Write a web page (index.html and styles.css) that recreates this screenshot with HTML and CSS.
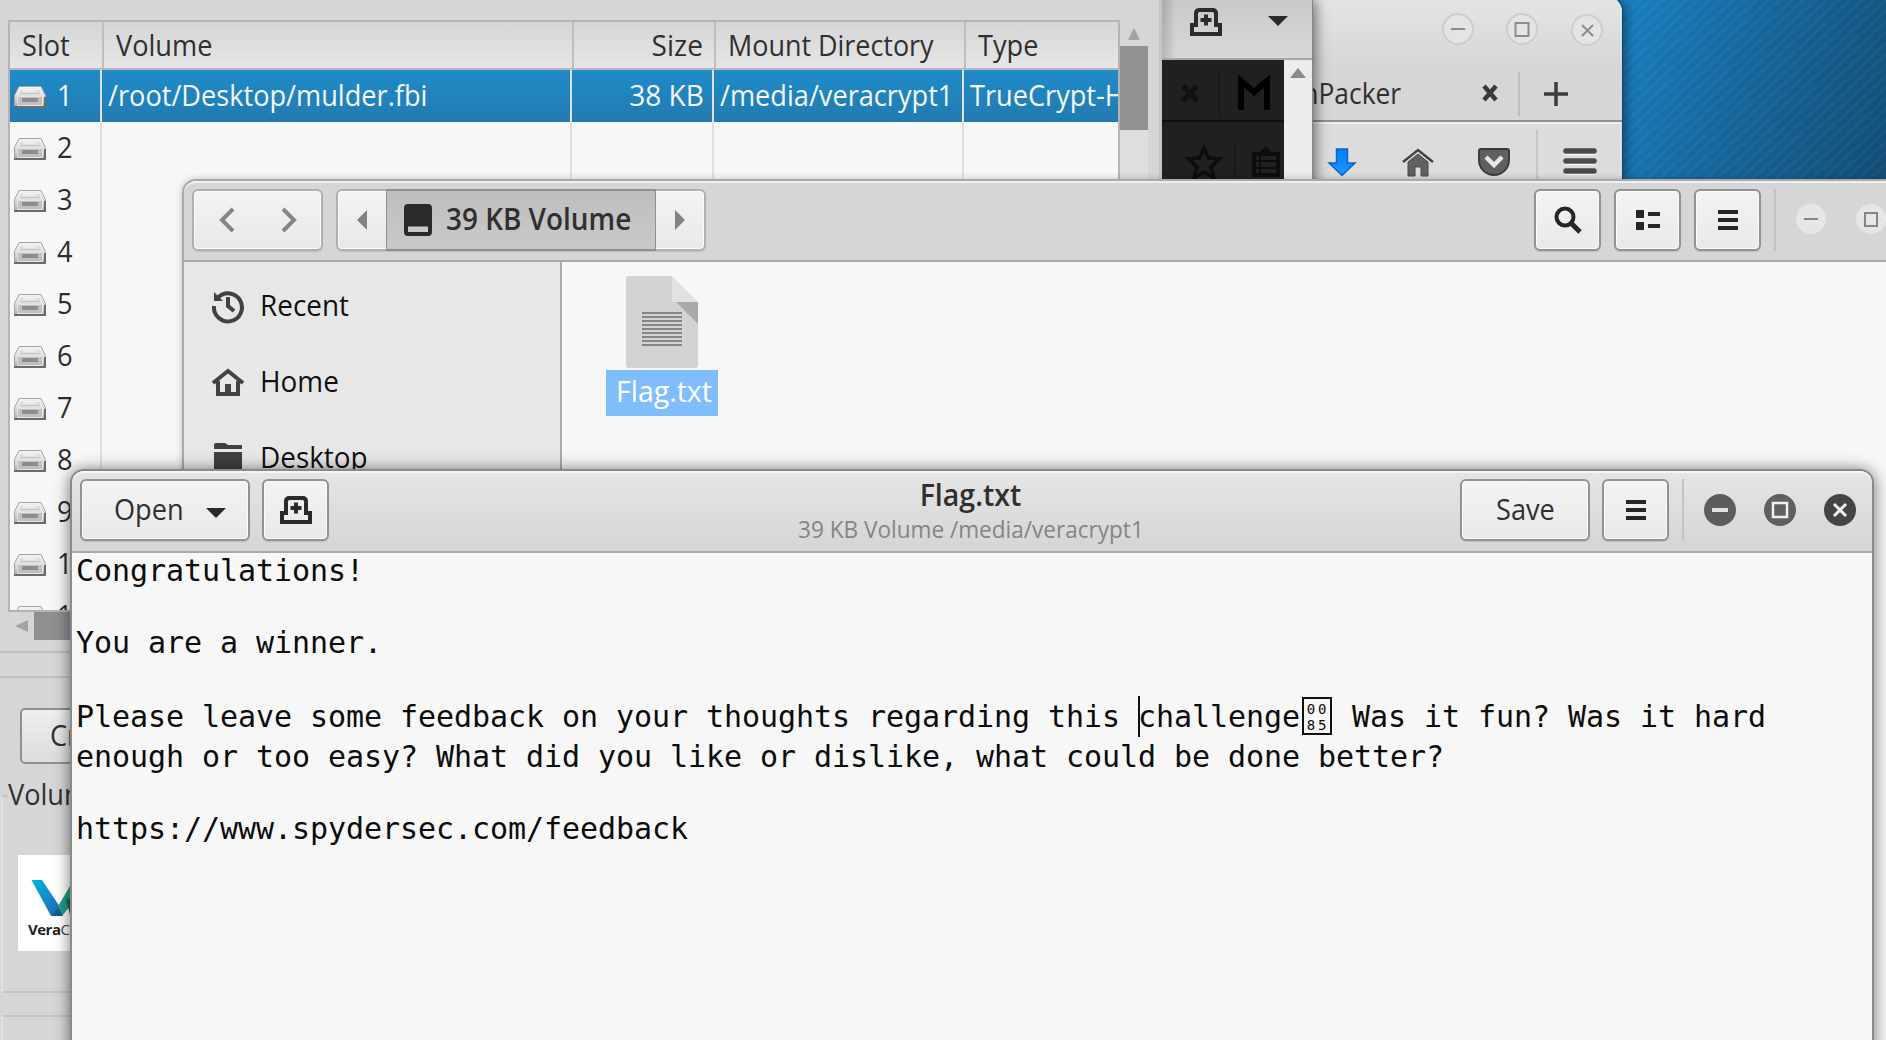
FILE: index.html
```
<!DOCTYPE html>
<html lang="en">
<head>
<meta charset="utf-8">
<title>Desktop</title>
<link rel="stylesheet" href="styles.css">
</head>
<body>
<svg class="defs" aria-hidden="true">
  <defs>
    <linearGradient id="metal" x1="0" y1="0" x2="0" y2="1"><stop offset="0" stop-color="#f4f4f4"/><stop offset=".5" stop-color="#dedede"/><stop offset="1" stop-color="#a0a0a0"/></linearGradient>
    <linearGradient id="arrow" x1="0" y1="0" x2="0" y2="1"><stop offset="0" stop-color="#007df8"/><stop offset="1" stop-color="#1d98ff"/></linearGradient>
    <linearGradient id="vee" x1="0" y1="0" x2="1" y2="1"><stop offset="0" stop-color="#00b4e0"/><stop offset="1" stop-color="#2460b4"/></linearGradient>
    <symbol id="drive" viewBox="0 0 32 22">
      <path d="M5 .5h22l4.500 9v12H.5v-12z" fill="url(#metal)" stroke="#a5a5a5"/>
      <path d="M7 5.500l1-1M25 5.500l-1-1M6 7.500h20" stroke="#c6c6c6" stroke-width="1.500" fill="none"/>
      <path d="M3.500 10.500h25v9h-25z" fill="#c0c0c0" stroke="#e4e4e4"/>
      <path d="M8 12h16v4H8z" fill="#8c8c8c"/>
      <path d="M0 21h32M31 11v10" stroke="#6c6c6c" stroke-width="2"/>
    </symbol>
    <symbol id="newdoc" viewBox="0 0 32 28">
      <path d="M6 17V5.500Q6 2 9.500 2h13Q26 2 26 5.500V17h4v9H2v-9z" fill="none" stroke="#2b2b2b" stroke-width="4"/>
      <path d="M16 6.500v11M10.500 12h11" stroke="#2b2b2b" stroke-width="4"/>
    </symbol>
    <symbol id="lines" viewBox="0 0 20 20"><path d="M0 2h20M0 10h20M0 18h20" stroke="#262626" stroke-width="4"/></symbol>
  </defs>
</svg>

<main class="desktop">

  <section class="win veracrypt">
    <div class="list">
      <div class="cols head"><span><i class="t">Slot</i></span><span><i class="t">Volume</i></span><span class="num"><i class="t">Size</i></span><span><i class="t mount">Mount Directory</i></span><span><i class="t">Type</i></span></div>
      <div class="cols row sel"><span><svg class="drive"><use href="#drive"/></svg><i class="t">1</i></span><span><i class="t">/root/Desktop/mulder.fbi</i></span><span class="num"><i class="t">38 KB</i></span><span><i class="t">/media/veracrypt1</i></span><span><i class="t">TrueCrypt-H</i></span></div>
      <div class="cols row"><span><svg class="drive"><use href="#drive"/></svg><i class="t">2</i></span><span></span><span></span><span></span><span></span></div>
      <div class="cols row"><span><svg class="drive"><use href="#drive"/></svg><i class="t">3</i></span><span></span><span></span><span></span><span></span></div>
      <div class="cols row"><span><svg class="drive"><use href="#drive"/></svg><i class="t">4</i></span><span></span><span></span><span></span><span></span></div>
      <div class="cols row"><span><svg class="drive"><use href="#drive"/></svg><i class="t">5</i></span><span></span><span></span><span></span><span></span></div>
      <div class="cols row"><span><svg class="drive"><use href="#drive"/></svg><i class="t">6</i></span><span></span><span></span><span></span><span></span></div>
      <div class="cols row"><span><svg class="drive"><use href="#drive"/></svg><i class="t">7</i></span><span></span><span></span><span></span><span></span></div>
      <div class="cols row"><span><svg class="drive"><use href="#drive"/></svg><i class="t">8</i></span><span></span><span></span><span></span><span></span></div>
      <div class="cols row"><span><svg class="drive"><use href="#drive"/></svg><i class="t">9</i></span><span></span><span></span><span></span><span></span></div>
      <div class="cols row"><span><svg class="drive"><use href="#drive"/></svg><i class="t">10</i></span><span></span><span></span><span></span><span></span></div>
      <div class="cols row"><span><svg class="drive"><use href="#drive"/></svg><i class="t">11</i></span><span></span><span></span><span></span><span></span></div>
    </div>
    <div class="vbar"><svg width="12" height="12"><path d="M6 0l6 12H0z" fill="#a3a3a3"/></svg><div class="vthumb"></div></div>
    <div class="hbar"><svg width="13" height="12"><path d="M0 6L13 0v12z" fill="#a3a3a3"/></svg><div class="hthumb"></div></div>
    <div class="lower">
      <div class="actions"><div class="create"><i class="t">Create Volume</i></div></div>
      <div class="group">
        <i class="t legend">Volume</i>
        <div class="logo">
          <svg width="96" height="64" viewBox="18 854 96 64">
            <path d="M31.500 879H42L62 909V915H51z" fill="url(#vee)"/>
            <path d="M54 912L73 880H90L62 915H52z" fill="#239a8c"/>
            <path d="M66 897L78 903 70 914z" fill="#13693f"/>
            <path d="M52 915l6-9 5 9z" fill="#125f86"/>
          </svg>
          <div class="brand"><b>Vera</b>Crypt</div>
        </div>
      </div>
      <div class="group last"></div>
    </div>
  </section>

  <section class="win browser">
    <div class="btitle">
      <svg width="168" height="36" fill="none" stroke="#8b8b8b" stroke-width="2">
        <g fill="#e4e4e4" stroke="#d0cecc"><circle cx="18" cy="17" r="15"/><circle cx="82" cy="17" r="15"/><circle cx="147" cy="18" r="15"/></g>
        <path d="M11 17h14M75.500 11h13v13h-13zM142 13l11 11M153 13l-11 11"/>
      </svg>
    </div>
    <div class="tabs">
      <i class="t">UnPacker</i>
      <svg class="tabx" width="16" height="16"><path d="M2 1l12 14M14 1L2 15" stroke="#3a3a3a" stroke-width="4.500"/></svg>
      <span class="tabsep"></span>
      <svg class="plus" width="24" height="24"><path d="M12 0v24M0 12h24" stroke="#3c3c3c" stroke-width="3.500"/></svg>
    </div>
    <div class="tools">
      <svg width="28" height="28" viewBox="0 0 28 28"><path d="M8.500 1h11v14H27L14 27.500 1 15h7.500z" fill="url(#arrow)" stroke="#0a66c4" stroke-width="1.500"/></svg>
      <svg width="32" height="28" viewBox="0 0 32 28"><path d="M1 14L16 2l15 12" fill="none" stroke="#434343" stroke-width="2.500"/><path d="M6 14L16 6l10 8v14h-7V19h-6v9H6z" fill="#606060" stroke="#4a4a4a"/></svg>
      <svg width="32" height="28" viewBox="0 0 32 28"><path d="M1 3Q1 1 3 1h26q2 0 2 2v9a15 15 0 0 1-30 0z" fill="#606060" stroke="#3c3c3c" stroke-width="2"/><path d="M8 9l8 8 8-8" fill="none" stroke="#e8e8e8" stroke-width="4.500"/></svg>
      <span class="toolsep"></span>
      <svg class="menu" width="32" height="26"><path d="M1 3h30M1 13h30M1 23h30" stroke="#fafafa" stroke-width="5" transform="translate(0 1.500)"/><path d="M2 3h28M2 13h28M2 23h28" stroke="#4a4a4a" stroke-width="5.500" stroke-linecap="round"/></svg>
    </div>
  </section>

  <section class="win oldedit">
    <div class="ohead">
      <svg width="32" height="28"><use href="#newdoc"/></svg>
      <svg width="20" height="10"><path d="M0 0h20L10 10z" fill="#2a2a2a"/></svg>
    </div>
    <div class="obody">
      <svg class="dark" width="122" height="120" viewBox="0 0 122 120">
        <path d="M0 0h122v120H0z" fill="#202020"/>
        <path d="M21 26l14 15M35 26L21 41" stroke="#111" stroke-width="5"/>
        <path d="M57 12v44M73 84v36" stroke="#1a1a1a" stroke-width="2"/>
        <path d="M79 50V21l13 11 13-11v29" fill="none" stroke="#000" stroke-width="6"/>
        <path d="M0 61h122" stroke="#101010" stroke-width="2"/>
        <path d="M42 88l4.500 10 11 1-8.500 8 3 11-10-6-10 6 3-11-8.500-8 11-1z" fill="none" stroke="#0d0d0d" stroke-width="3.500"/>
        <path d="M92 94h24v21H92z" fill="none" stroke="#0d0d0d" stroke-width="4"/>
        <path d="M97 93l7-7 7 7z" fill="#0d0d0d"/>
        <path d="M92 101h24M92 108h24M98 94v21" fill="none" stroke="#0d0d0d" stroke-width="2"/>
      </svg>
      <div class="obar"><svg width="16" height="10"><path d="M8 0l8 10H0z" fill="#8a8a8a"/></svg></div>
    </div>
  </section>

  <section class="win files">
    <header class="fhead">
      <div class="btn nav">
        <svg width="78" height="26" fill="none" stroke="#858585" stroke-width="4"><path d="M14 2L3 13l11 11M64 2l11 11L64 24"/></svg>
      </div>
      <div class="btn path">
        <span class="end"><svg width="10" height="20"><path d="M10 0v20L0 10z" fill="#828282"/></svg></span>
        <span class="cur"><svg width="28" height="32"><path d="M4 0h20q4 0 4 4v24q0 4-4 4H4q-4 0-4-4V4q0-4 4-4z" fill="#2a2a2a"/><path d="M4 22.500h20v5.500H4z" fill="#c8c8c8"/></svg><i class="t bold">39 KB Volume</i></span>
        <span class="end"><svg width="10" height="20"><path d="M0 0v20l10-10z" fill="#828282"/></svg></span>
      </div>
      <div class="grow"></div>
      <div class="btn sq"><svg width="28" height="28"><circle cx="11" cy="11" r="8.500" fill="none" stroke="#262626" stroke-width="4"/><path d="M17 17l9 9" stroke="#262626" stroke-width="5"/></svg></div>
      <div class="btn sq"><svg width="24" height="20"><path d="M0 0h8v8H0zM12 2h12v4H12zM0 12h8v8H0zM12 14h12v4H12z" fill="#262626"/></svg></div>
      <div class="btn sq"><svg width="20" height="20"><use href="#lines"/></svg></div>
      <div class="fwm">
        <svg width="100" height="32" fill="none" stroke="#858585" stroke-width="2"><g fill="#e6e6e6" stroke="none"><circle cx="16" cy="16" r="15"/><circle cx="76" cy="16" r="15"/></g><path d="M9 16h14M70 10h12v13H70z"/></svg>
      </div>
    </header>
    <div class="fbody">
      <aside class="side">
        <div class="place"><svg width="32" height="32" fill="none" stroke="#424242" stroke-width="4"><path d="M6 7.500A14 14 0 1 1 2 16"/><path d="M16 7v9l6 5"/><path d="M2 2v9h9z" fill="#424242" stroke="none"/></svg><i class="t">Recent</i></div>
        <div class="place"><svg width="32" height="28" fill="none" stroke="#424242" stroke-width="4"><path d="M1 15L16 3l15 12"/><path d="M6 13v13h20V13"/><path d="M16 16v10" stroke-width="6"/></svg><i class="t">Home</i></div>
        <div class="place"><svg width="32" height="30"><path d="M2 2q0-2 2-2h9l3 2h14v4H2zM2 9h28v19H2z" fill="#404040"/></svg><i class="t">Desktop</i></div>
      </aside>
      <div class="canvas">
        <div class="file">
          <svg width="72" height="92">
            <path d="M3 0h43l26 26v63q0 3-3 3H3q-3 0-3-3V3q0-3 3-3z" fill="#d3d3d3"/>
            <path d="M46 0l26 26H46z" fill="#e2e2e2"/><path d="M50 26h22v22z" fill="#a9a9a9"/>
            <path d="M16 37h40M16 41h40M16 45h40M16 49h40M16 53h40M16 57h40M16 61h40M16 65h40M16 69h40" stroke="#858585" stroke-width="2"/>
          </svg>
          <div class="fname"><i class="t">Flag.txt</i></div>
        </div>
      </div>
    </div>
  </section>

  <section class="win editor">
    <header class="ehead">
      <div class="btn open"><i class="t">Open</i><svg width="20" height="10"><path d="M0 0h20L10 10z" fill="#2a2a2a"/></svg></div>
      <div class="btn sq new"><svg width="32" height="28"><use href="#newdoc"/></svg></div>
      <div class="title"><i class="t bold">Flag.txt</i><i class="t sub">39 KB Volume /media/veracrypt1</i></div>
      <div class="btn save"><i class="t">Save</i></div>
      <div class="btn sq"><svg width="20" height="20"><use href="#lines"/></svg></div>
      <div class="wm">
        <svg width="152" height="32" fill="none" stroke="#f0f0f0"><circle cx="16" cy="16" r="16" fill="#5d5d5d" stroke="none"/><circle cx="76" cy="16" r="16" fill="#606060" stroke="none"/><circle cx="136" cy="16" r="16" fill="#454545" stroke="none"/><path d="M8 16h16" stroke-width="4" stroke="#e0e0e0"/><path d="M69 9h14v14H69z" stroke-width="2.500"/><path d="M130 10l12 12M142 10l-12 12" stroke-width="3"/></svg>
      </div>
    </header>
    <div class="text">
      <p>Congratulations!</p>
      <p></p>
      <p>You are a winner.</p>
      <p></p>
      <p class="tall"><span>Please leave some feedback on your thoughts regarding this </span><span class="caret"></span><span>challenge</span><span class="hex"><b>00</b><b>85</b></span><span> Was it fun? Was it hard</span></p>
      <p>enough or too easy? What did you like or dislike, what could be done better?</p>
      <p></p>
      <p>https://www.spydersec.com/feedback</p>
    </div>
  </section>
</main>
</body>
</html>
```
FILE: styles.css
```
* { box-sizing: border-box; }
body { margin: 0; font: 30px/36px "Open Sans", "Noto Sans", sans-serif; color: #303030; overflow: hidden; }
svg { display: block; flex: none; overflow: visible; }
.defs { position: absolute; width: 0; height: 0; }

.desktop {
  position: relative; width: 1886px; height: 1040px; overflow: hidden;
  background:
    repeating-linear-gradient(137deg, rgba(255,255,255,0) 0 4px, rgba(255,255,255,.035) 5px 7px, rgba(255,255,255,0) 8px),
    linear-gradient(112deg, #187bbb 8%, #145f90 60%, #114a6e 105%) no-repeat right top / 272px 190px;
}
.win { position: absolute; }

/* condensed interface text */
.t { display: inline-block; font-style: normal; white-space: nowrap; transform: scaleX(.905); transform-origin: left; }
.num .t { transform-origin: right; transform: scaleX(.935); }
.t.bold { font-weight: 600; }
.t.mount { transform: scaleX(.897); }

/* volume manager */
.veracrypt {
  left: 0; top: 0; width: 1162px; height: 1040px; background: #d6d6d6;
  padding-top: 20px; display: grid; align-content: start;
  grid-template-columns: 1120px 28px; grid-template-rows: 592px 28px auto;
  box-shadow: inset -4px 0 0 -1px #c6c6c6;
}
.list { margin-left: 8px; border: 2px solid #b4b4b4; overflow: hidden; background: #f7f7f7; }
.cols { display: grid; grid-template-columns: 92px 470px 142px 250px 1fr; }
.cols > span { display: flex; align-items: center; overflow: hidden; border-right: 2px solid #e0e0e0; padding-left: 6px; }
.cols > span:last-child { border-right: 0; }
.cols .num { justify-content: flex-end; padding-right: 8px; }
.head { height: 48px; grid-template-columns: 94px 470px 142px 250px 1fr; background: linear-gradient(#d6d6d6, #e6e6e6); border-bottom: 2px solid #b9b9b9; }
.head > span { padding: 0 0 1px 12px; border-color: #bfbfbf; }
.head .num { padding-right: 11px; }
.row { height: 52px; color: #2d2d2d; }
.row > span { padding-bottom: 2px; }
.row > span:first-child { padding-left: 4px; }
.drive { width: 32px; height: 22px; margin: 4px 11px 0 0; }
.sel { background: linear-gradient(#1f8bc8, #227bb0); color: #f4f8fb; }
.vbar { padding-top: 8px; background: linear-gradient(#d6d6d6 26px, #dedede 26px); }
.vbar svg { margin: 0 auto 6px; }
.vthumb { height: 84px; background: #919191; }
.hbar { grid-column: 1 / 3; display: flex; align-items: center; padding-left: 15px; gap: 6px; }
.hthumb { width: 900px; height: 28px; background: #8f8f8f; }
.lower { grid-column: 1 / 3; padding-top: 11px; }
.actions { height: 104px; border-top: 2px solid #bebebe; padding-top: 23px; }
.actions::before { content: ""; display: block; height: 2px; background: #c2c2c2; margin-bottom: -2px; }
.create { margin: 32px 0 0 20px; width: 260px; height: 56px; border: 2px solid #909090; border-radius: 5px; background: linear-gradient(#efefef, #dcdcdc); padding: 7px 0 0 28px; }
.group { margin: 40px 0 0 1px; height: 198px; border: 2px solid #c4c4c4; border-left-color: #e2e2e2; }
.legend { margin: -21px 0 0 5px; background: #d6d6d6; display: block; width: 110px; }
.logo { margin: 43px 0 0 15px; width: 104px; height: 96px; background: #fff; overflow: hidden; }
.brand { font-size: 15px; line-height: 20px; margin: 0 0 0 10px; color: #444; letter-spacing: -.5px; }
.brand b { color: #222; }
.group.last { margin-top: 22px; height: 60px; }

/* browser */
.browser { left: 1200px; top: -4px; width: 422px; height: 240px; border-radius: 0 16px 0 0; background: #dcdcdc; box-shadow: 1px 0 0 #0d4468, 3px 2px 12px rgba(0,0,0,.45); }
.btitle { height: 71px; border-radius: 0 16px 0 0; background: linear-gradient(#e5e5e5, #d6d6d6); padding: 16px 14px 0; display: flex; justify-content: flex-end; }
.tabs { height: 55px; background: #d6d6d6; border-bottom: 2px solid #8f8f8f; display: flex; align-items: center; padding: 0 0 0 83px; }
.tabs .t { width: 125px; transform: scaleX(.88); margin-bottom: 2px; }
.tabx { margin: -1px 0 0 74px; }
.tabsep { width: 2px; height: 44px; margin: 0 24px 0 20px; background: #bebebe; }
.tools { border-top: 2px solid #efefef; display: flex; padding: 24px 0 0 128px; align-items: flex-start; }
.tools svg + svg { margin-left: 46px; }
.tools svg + svg + svg { margin-left: 44px; }
.toolsep { width: 2px; height: 50px; margin: -18px 0 0 26px; background: #c6c6c6; }
.tools .menu { margin-left: 26px; }

/* background editor */
.oldedit { left: 1162px; top: 0; width: 150px; height: 240px; box-shadow: 0 0 0 1px #858585, 4px 0 12px rgba(0,0,0,.5); background: #ececec; clip-path: inset(0 -20px 0 0); }
.ohead { height: 60px; background: linear-gradient(90deg, rgba(0,0,0,.16), transparent 14px), linear-gradient(#c9c9c9, #d8d8d8); border-bottom: 2px solid #a8a8a8; padding: 8px 0 0 28px; display: flex; gap: 46px; }
.ohead svg + svg { margin-top: 8px; }
.obody { display: flex; }
.obar { width: 28px; padding: 8px 0 0 6px; }

/* buttons */
.btn { display: flex; align-items: center; height: 62px; border: 2px solid #929292; border-radius: 6px; background: linear-gradient(#f3f3f3, #e9e9e9); box-shadow: inset 0 0 0 1px #fafafa, 0 1px 1px rgba(0,0,0,.12); }
.sq { width: 67px; justify-content: center; flex: none; }

/* file manager */
.files { left: 182px; top: 179px; width: 1760px; height: 900px; border: 2px solid #a9a9a9; border-radius: 14px 14px 0 0; background: #f7f7f7; box-shadow: 0 0 7px rgba(0,0,0,.22); }
.fhead { height: 81px; border-top: 2px solid #efefef; border-bottom: 2px solid #a9a9a9; border-radius: 12px 12px 0 0; background: #d6d6d6; display: flex; padding: 6px 0 0 8px; }
.nav { width: 131px; justify-content: center; border-color: #b0b0b0; }
.path { width: 370px; margin-left: 13px; border-color: #b0b0b0; }
.end { width: 48px; display: flex; justify-content: center; }
.cur { width: 270px; height: 62px; border: 2px solid #8f8f8f; border-width: 2px 1px; background: linear-gradient(#bebebe, #c9c9c9); display: flex; align-items: center; padding-left: 17px; gap: 14px; flex: none; }
.cur .t { margin-bottom: 2px; transform: scaleX(.93); }
.grow { width: 828px; flex: none; }
.fhead .sq { margin-right: 13px; }
.fwm { height: 62px; border-left: 2px solid #c2c2c2; padding: 14px 0 0 19px; }
.fbody { display: flex; height: 260px; }
.side { width: 378px; flex: none; background: #e7e7e7; border-right: 2px solid #ababab; padding-top: 6px; }
.place { height: 76px; display: flex; align-items: center; padding-left: 28px; gap: 16px; color: #111; }
.place .t { margin-bottom: 3px; transform: scaleX(.93); }
.canvas { padding: 14px 0 0 44px; }
.file { width: 112px; display: flex; flex-direction: column; align-items: center; gap: 2px; }
.fname { width: 112px; height: 46px; background: #80bdfd; color: #fff; padding: 3px 0 0 10px; }
.fname .t { transform: scaleX(.95); }

/* text editor */
.editor { left: 70px; top: 469px; width: 1804px; height: 600px; border: 2px solid #8a8a8a; border-radius: 14px 14px 0 0; background: #f7f7f7; box-shadow: 0 1px 16px rgba(0,0,0,.55); }
.ehead { height: 82px; border-top: 2px solid #f5f5f5; border-bottom: 2px solid #a9a9a9; border-radius: 12px 12px 0 0; background: linear-gradient(#e5e5e5, #d5d5d5); display: flex; padding: 6px 0 0 8px; }
.open { width: 170px; padding-left: 32px; flex: none; }
.open .t { width: 76px; margin-bottom: 2px; }
.open svg { margin: 5px 0 0 16px; }
.new { margin-left: 12px; }
.title { width: 1131px; flex: none; margin: -2px -76px 0 76px; display: flex; flex-direction: column; align-items: center; }
.title .t { transform-origin: center; transform: scaleX(.95); line-height: 36px; }
.title .sub { font-size: 24px; line-height: 34px; color: #858585; transform: scaleX(.94); margin-top: -1px; }
.save { width: 130px; justify-content: center; margin-right: 12px; flex: none; position: relative; }
.save .t { transform-origin: center; margin-bottom: 2px; }
.wm { height: 62px; margin-left: 13px; border-left: 2px solid #c4c4c4; padding: 15px 0 0 20px; }
.text { padding: 0 0 0 4px; font: 30px/36px "DejaVu Sans Mono", monospace; letter-spacing: -.061px; color: #0c0c0c; }
.text p { margin: 0; height: 36px; white-space: pre; }
.text .tall { height: 42px; padding-top: 2px; display: flex; }
.caret { width: 2px; margin-right: -2px; height: 41px; margin-top: -3px; background: #111; }
.hex { display: grid; width: 30px; height: 38px; margin: -2px 2px 0; border: 2px solid #111; font-size: 14px; line-height: 15px; padding: 3px 0 0 2px; text-align: center; letter-spacing: 3px; align-content: space-between; }
.hex b { font-weight: 400; }
```
